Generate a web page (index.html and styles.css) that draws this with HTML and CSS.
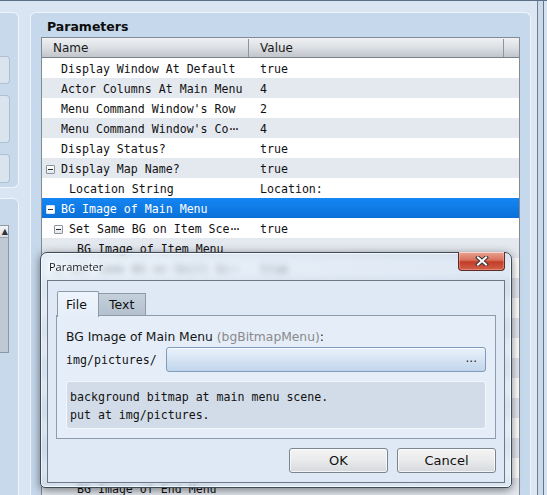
FILE: index.html
```html
<!DOCTYPE html>
<html lang="en">
<head>
  <meta charset="UTF-8">
  <title>Plugin Parameters</title>
  <link rel="stylesheet" href="styles.css">
</head>
<body>
  <div class="app">
    <!-- left column, mostly scrolled out of view -->
    <div class="side">
      <div class="side-group group-top">
        <div class="side-btn btn-a"></div>
        <div class="side-btn btn-b"></div>
        <div class="side-btn btn-c"></div>
      </div>
      <div class="side-group group-bottom">
        <div class="side-list">
          <div class="side-list-head">▲</div>
        </div>
      </div>
    </div>

    <div class="params">
      <div class="params-title">Parameters</div>
      <div class="grid">
        <div class="grid-head">
          <div class="head-name">Name</div>
          <div class="head-value">Value</div>
          <div class="head-fill"></div>
        </div>
        <div class="row"><div class="cell-name lv0">Display Window At Default</div><div class="cell-value">true</div></div>
        <div class="row alt"><div class="cell-name lv0">Actor Columns At Main Menu</div><div class="cell-value">4</div></div>
        <div class="row"><div class="cell-name lv0">Menu Command Window's Row</div><div class="cell-value">2</div></div>
        <div class="row alt"><div class="cell-name lv0">Menu Command Window's Co<span class="more">···</span></div><div class="cell-value">4</div></div>
        <div class="row"><div class="cell-name lv0">Display Status?</div><div class="cell-value">true</div></div>
        <div class="row alt"><div class="cell-name lv0 folder"><span class="toggle"></span>Display Map Name?</div><div class="cell-value">true</div></div>
        <div class="row"><div class="cell-name lv1">Location String</div><div class="cell-value">Location:</div></div>
        <div class="row selected"><div class="cell-name lv0 folder"><span class="toggle"></span>BG Image of Main Menu</div><div class="cell-value"></div></div>
        <div class="row"><div class="cell-name lv1 folder"><span class="toggle"></span>Set Same BG on Item Sce<span class="more">···</span></div><div class="cell-value">true</div></div>
        <div class="row alt"><div class="cell-name lv2">BG Image of Item Menu</div><div class="cell-value"></div></div>
        <div class="row"><div class="cell-name lv1 folder"><span class="toggle"></span>Set Same BG on Skill Sc<span class="more">···</span></div><div class="cell-value">true</div></div>
        <div class="row alt"><div class="cell-name lv2">BG Image of Skill Menu</div><div class="cell-value"></div></div>
        <div class="row"><div class="cell-name lv1 folder"><span class="toggle"></span>Set Same BG on Equip Sc<span class="more">···</span></div><div class="cell-value">true</div></div>
        <div class="row alt"><div class="cell-name lv2">BG Image of Equip Menu</div><div class="cell-value"></div></div>
        <div class="row"><div class="cell-name lv1 folder"><span class="toggle"></span>Set Same BG on Status S<span class="more">···</span></div><div class="cell-value">true</div></div>
        <div class="row alt"><div class="cell-name lv2">BG Image of Status Menu</div><div class="cell-value"></div></div>
        <div class="row"><div class="cell-name lv1 folder"><span class="toggle"></span>Set Same BG on Options <span class="more">···</span></div><div class="cell-value">true</div></div>
        <div class="row alt"><div class="cell-name lv2">BG Image of Options Menu</div><div class="cell-value"></div></div>
        <div class="row"><div class="cell-name lv1 folder"><span class="toggle"></span>Set Same BG on File Sce<span class="more">···</span></div><div class="cell-value">true</div></div>
        <div class="row alt"><div class="cell-name lv2">BG Image of File Menu</div><div class="cell-value"></div></div>
        <div class="row"><div class="cell-name lv1 folder"><span class="toggle"></span>Set Same BG on End Scene</div><div class="cell-value">true</div></div>
        <div class="row alt"><div class="cell-name lv2">BG Image of End Menu</div><div class="cell-value"></div></div>
      </div>
    </div>

    <div class="frame-edge"></div>
  </div>

  <!-- edit dialog for the selected parameter -->
  <div class="dialog">
    <div class="dialog-bar">
      Parameter
      <div class="close">
        <svg width="14" height="10" viewBox="0 0 14 10">
          <path d="M3 1.5 L11 8.5 M11 1.5 L3 8.5" stroke="#3c3434" stroke-width="4" stroke-linecap="square"/>
          <path d="M3 1.5 L11 8.5 M11 1.5 L3 8.5" stroke="#ffffff" stroke-width="2" stroke-linecap="square"/>
        </svg>
      </div>
    </div>
    <div class="dialog-body">
      <div class="tabs">
        <div class="tab active">File</div>
        <div class="tab">Text</div>
      </div>
      <div class="tab-panel">
        <div class="field-label">BG Image of Main Menu <span class="field-key">(bgBitmapMenu)</span>:</div>
        <div class="field-row">
          <div class="field-prefix">img/pictures/</div>
          <div class="file-input">...</div>
        </div>
        <div class="field-desc">background bitmap at main menu scene.<br>put at img/pictures.</div>
      </div>
      <div class="actions">
        <button class="btn">OK</button>
        <button class="btn">Cancel</button>
      </div>
    </div>
  </div>
</body>
</html>
```

FILE: styles.css
```css
* {
  box-sizing: border-box;
  margin: 0;
  padding: 0;
}

body {
  width: 547px;
  height: 495px;
  overflow: hidden;
  position: relative;
  background: #d9e5f2;
  font-family: 'DejaVu Sans', sans-serif;
  font-size: 12px;
  color: #111;
}

.app {
  display: flex;
  height: 495px;
  border-top: 1px solid #5d6f84;
}

/* left column */
.side {
  width: 30px;
  flex: none;
  padding-top: 11px;
}

.side-group {
  width: 19px;
  background: #c8d9eb;
  border: 1px solid #eef4fa;
  border-left: none;
  border-radius: 0 6px 6px 0;
}

.group-top {
  height: 176px;
  padding-top: 43px;
}

.side-btn {
  width: 10px;
  margin-bottom: 11px;
  background: #d9e4ef;
  border: 1px solid #aebfd0;
  border-left: none;
  border-radius: 0 4px 4px 0;
}

.btn-a { height: 28px; }
.btn-b { height: 48px; }
.btn-c { height: 29px; }

.group-bottom {
  margin-top: 10px;
  height: 320px;
  padding-top: 26px;
  border-radius: 0 6px 0 0;
}

.side-list {
  width: 9px;
  height: 128px;
  background: #bec9d4;
  border: 1px solid #8c98a5;
  border-left: none;
}

.side-list-head {
  height: 12px;
  background: linear-gradient(#f4f6f8, #d6dbe1);
  border-bottom: 1px solid #9aa5b1;
  font-size: 8px;
  line-height: 12px;
  text-align: right;
  color: #333;
  overflow: hidden;
}

/* parameters panel */
.params {
  width: 501px;
  flex: none;
  margin-top: 11px;
  padding: 0 10px;
  background: #c6d8eb;
  border: 1px solid #eef4fa;
  border-bottom: none;
  border-radius: 6px 6px 0 0;
}

.params-title {
  height: 24px;
  padding: 2px 0 0 6px;
  line-height: 24px;
  font-weight: bold;
  font-size: 12.5px;
  color: #0d0d0d;
}

.grid {
  height: 470px;
  overflow: hidden;
  background: #fff;
  border: 1px solid #828b94;
  border-bottom: none;
}

.grid-head {
  display: flex;
  height: 20px;
  padding-top: 1px;
  background: linear-gradient(#eff1f3, #dcdfe3 50%, #c1c6cc);
  border-bottom: 1px solid #7a828a;
  line-height: 19px;
  color: #1a1a1a;
}

.head-name {
  width: 207px;
  padding-left: 11px;
  border-right: 1px solid #8e959c;
}

.head-value {
  width: 255px;
  padding-left: 11px;
  border-right: 1px solid #8e959c;
}

.head-fill {
  flex: 1;
}

.row {
  display: flex;
  height: 20px;
  line-height: 18px;
  font-family: 'DejaVu Sans Mono', monospace;
  font-size: 11.6px;
  color: #111;
  white-space: nowrap;
}

.row.alt {
  background: #e4e9f0;
}

.row.selected {
  background: linear-gradient(#1586f3, #0a70d8);
  color: #fff;
}

.cell-name {
  width: 207px;
  flex: none;
  display: flex;
  align-items: center;
  padding-top: 2px;
  overflow: hidden;
}

.lv0 { padding-left: 19px; }
.lv1 { padding-left: 27px; }
.lv2 { padding-left: 35px; }
.lv0.folder { padding-left: 4px; }
.lv1.folder { padding-left: 12px; }

/* truncated names end in spaced middle dots */
.more {
  letter-spacing: -4px;
  margin-left: -1px;
}

.toggle {
  position: relative;
  width: 9px;
  height: 9px;
  margin-right: 6px;
  flex: none;
  border: 1px solid #8b949e;
  border-radius: 1px;
  background: linear-gradient(#ffffff, #e4e8ec);
}

.toggle::after {
  content: '';
  position: absolute;
  left: 1px;
  top: 3px;
  width: 5px;
  height: 1px;
  background: #2b2b2b;
}

.selected .toggle {
  border-color: #d6e6f6;
  background: #fff;
}

.cell-value {
  flex: 1;
  padding: 2px 0 0 11px;
}

/* window frame on the right */
.frame-edge {
  flex: 1;
  background: linear-gradient(to right, #dce7f3 0 6px, #6d7f95 6px 7px, #cbd9e8 7px 12px, #63768c 12px 13px, #d6e2ef 13px);
}

/* dialog */
.dialog {
  position: absolute;
  left: 40px;
  top: 252px;
  width: 472px;
  height: 236px;
  display: flex;
  flex-direction: column;
  padding: 0 6px 4px;
  border: 1px solid #3d4a57;
  border-radius: 7px 7px 5px 5px;
  background: linear-gradient(160deg, rgba(228, 238, 248, 0.72), rgba(196, 214, 234, 0.55) 45%, rgba(214, 228, 243, 0.66));
  backdrop-filter: blur(3px);
  box-shadow: 0 2px 10px rgba(0, 0, 0, 0.5), inset 0 0 0 1px rgba(255, 255, 255, 0.75);
}

.dialog-bar {
  position: relative;
  height: 27px;
  padding-left: 2px;
  line-height: 27px;
  font-family: 'Open Sans', sans-serif;
  font-size: 11px;
  color: #15202c;
  text-shadow: 0 0 6px #fff, 0 0 3px #fff;
}

.close {
  position: absolute;
  right: 0;
  top: -1px;
  width: 47px;
  height: 19px;
  display: flex;
  align-items: center;
  justify-content: center;
  background: linear-gradient(#eaa594, #d8705c 45%, #c33d27 55%, #d2604a);
  border: 1px solid #5e2c25;
  border-top: none;
  border-radius: 0 0 4px 4px;
  box-shadow: inset 0 1px 0 rgba(255, 255, 255, 0.45), inset 0 0 0 1px rgba(255, 210, 200, 0.35);
}

.dialog-body {
  flex: 1;
  padding: 9px 8px 0 8px;
  background: #dfe9f5;
  border: 1px solid #6b7887;
}

.tabs {
  display: flex;
  align-items: flex-end;
  height: 26px;
  padding-left: 1px;
}

.tab {
  height: 22px;
  width: 47px;
  margin-bottom: 1px;
  padding-left: 10px;
  line-height: 22px;
  font-size: 12.5px;
  color: #111;
  background: linear-gradient(#c4d0dc, #b3c0cd);
  border: 1px solid #8d9aa8;
  border-bottom: none;
  border-left: none;
}

.tab.active {
  position: relative;
  z-index: 1;
  width: 42px;
  height: 26px;
  margin-bottom: -1px;
  padding-left: 8px;
  line-height: 25px;
  background: linear-gradient(#eef4fb, #e5eef8);
  border-left: 1px solid #8d9aa8;
  border-radius: 2px 2px 0 0;
}

.tab-panel {
  height: 124px;
  margin-top: -1px;
  padding: 13px 9px 0 9px;
  background: #e5eef8;
  border: 1px solid #8d9bab;
}

.field-label {
  height: 16px;
  line-height: 16px;
  font-size: 12.3px;
  color: #151515;
}

.field-key {
  color: #8a8a8a;
}

.field-row {
  display: flex;
  align-items: center;
  height: 25px;
  margin-top: 2px;
}

.field-prefix {
  width: 100px;
  padding-top: 1px;
  font-family: 'DejaVu Sans Mono', monospace;
  font-size: 11.6px;
}

.file-input {
  flex: 1;
  height: 25px;
  padding-right: 8px;
  text-align: right;
  line-height: 20px;
  font-size: 12px;
  color: #222;
  background: linear-gradient(#eaf2fb, #d6e4f3 50%, #c0d5ec);
  border: 1px solid #7f9cba;
  border-radius: 3px;
  box-shadow: inset 0 1px 0 #f7fbff;
}

.field-desc {
  height: 48px;
  margin-top: 9px;
  padding: 6px 3px 0;
  line-height: 18px;
  font-family: 'DejaVu Sans Mono', monospace;
  font-size: 11.6px;
  color: #111;
  background: #d1dce8;
  border: 1px solid #f3f7fb;
  border-radius: 3px;
}

.actions {
  display: flex;
  justify-content: flex-end;
  gap: 9px;
  margin-top: 9px;
}

.btn {
  width: 99px;
  height: 25px;
  font-family: 'DejaVu Sans', sans-serif;
  font-size: 13px;
  color: #111;
  background: linear-gradient(#f4f4f4, #e9eaeb 50%, #d6d9dd);
  border: 1px solid #7c848c;
  border-radius: 3px;
  box-shadow: inset 0 0 0 1px rgba(255, 255, 255, 0.7);
}
```
